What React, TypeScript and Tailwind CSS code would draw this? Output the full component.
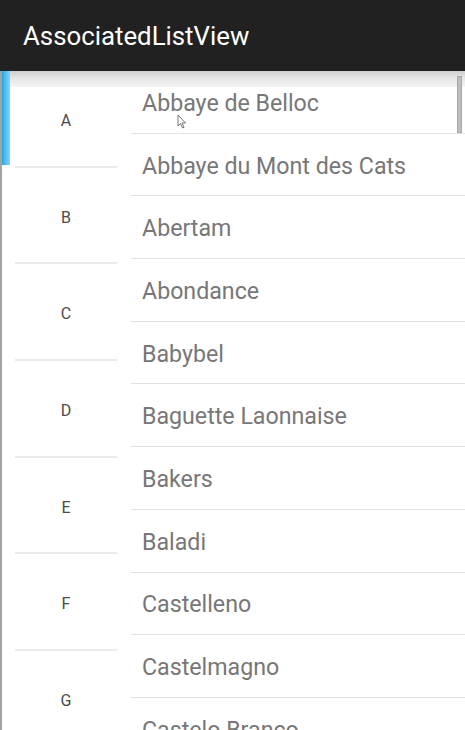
import React from 'react';

const letters = ['A', 'B', 'C', 'D', 'E', 'F', 'G'];

const cheeses = [
  'Abbaye de Belloc',
  'Abbaye du Mont des Cats',
  'Abertam',
  'Abondance',
  'Babybel',
  'Baguette Laonnaise',
  'Bakers',
  'Baladi',
  'Castelleno',
  'Castelmagno',
  'Castelo Branco',
];

const App: React.FC = () => {
  return (
    <div
      className="w-[465px] h-[730px] overflow-hidden flex flex-col bg-white"
      style={{ fontFamily: 'Roboto, "Noto Sans", sans-serif' }}
    >
      <header className="h-[71px] shrink-0 bg-[#212121] flex items-center pl-[23px]">
        <h1 className="text-[25.8px] text-white pt-[1px]">AssociatedListView</h1>
      </header>

      <div className="relative flex-1 flex overflow-hidden">
        {/* window edge behind the app */}
        <div className="w-[2px] bg-[#a3a3a3] shrink-0" />

        {/* index list */}
        <div className="w-[120px] shrink-0 flex flex-col">
          {letters.map((l, i) => (
            <div key={l} className="h-[96.7px] shrink-0 flex">
              <div
                className={
                  i === 0
                    ? 'w-[8px] h-[94px] bg-gradient-to-r from-[#1ea9e8] to-[#7fd6fb]'
                    : 'w-[8px]'
                }
              />
              <div className="flex-1 flex flex-col">
                <div className="flex-1 flex items-center justify-center pt-[5px] text-[16px] text-[#4a4a4a]">
                  {l}
                </div>
                <div className="h-[2px] mx-[5px] bg-[#ebebeb]" />
              </div>
            </div>
          ))}
        </div>

        <div className="w-[9px] shrink-0" />

        {/* item list */}
        <div className="flex-1 flex flex-col">
          {cheeses.map((c) => (
            <div
              key={c}
              className="h-[62.7px] shrink-0 flex items-center pl-[11px] pt-[3px] border-b border-[#e2e2e2] text-[23.2px] text-[#777777] whitespace-nowrap"
            >
              {c}
            </div>
          ))}
        </div>

        {/* header shadow */}
        <div className="absolute left-[10px] right-0 top-0 h-[16px] bg-gradient-to-b from-[#c9c9c9] via-[#e6e6e6] to-[#f2f2f2] opacity-90" />

        {/* scrollbar */}
        <div className="absolute left-[457px] top-[5px] w-[5px] h-[57px] bg-[#bdbdbd] border border-[#a8a8a8]" />

        {/* mouse pointer */}
        <svg className="absolute left-[177px] top-[43px]" width="10" height="16" viewBox="0 0 10 16">
          <path d="M1 1 L1 12 L3.5 9.5 L5.5 14 L7 13.3 L5 9 L8.5 9 Z" fill="#fff" stroke="#555" strokeWidth="0.8" />
        </svg>
      </div>
    </div>
  );
};

export default App;
